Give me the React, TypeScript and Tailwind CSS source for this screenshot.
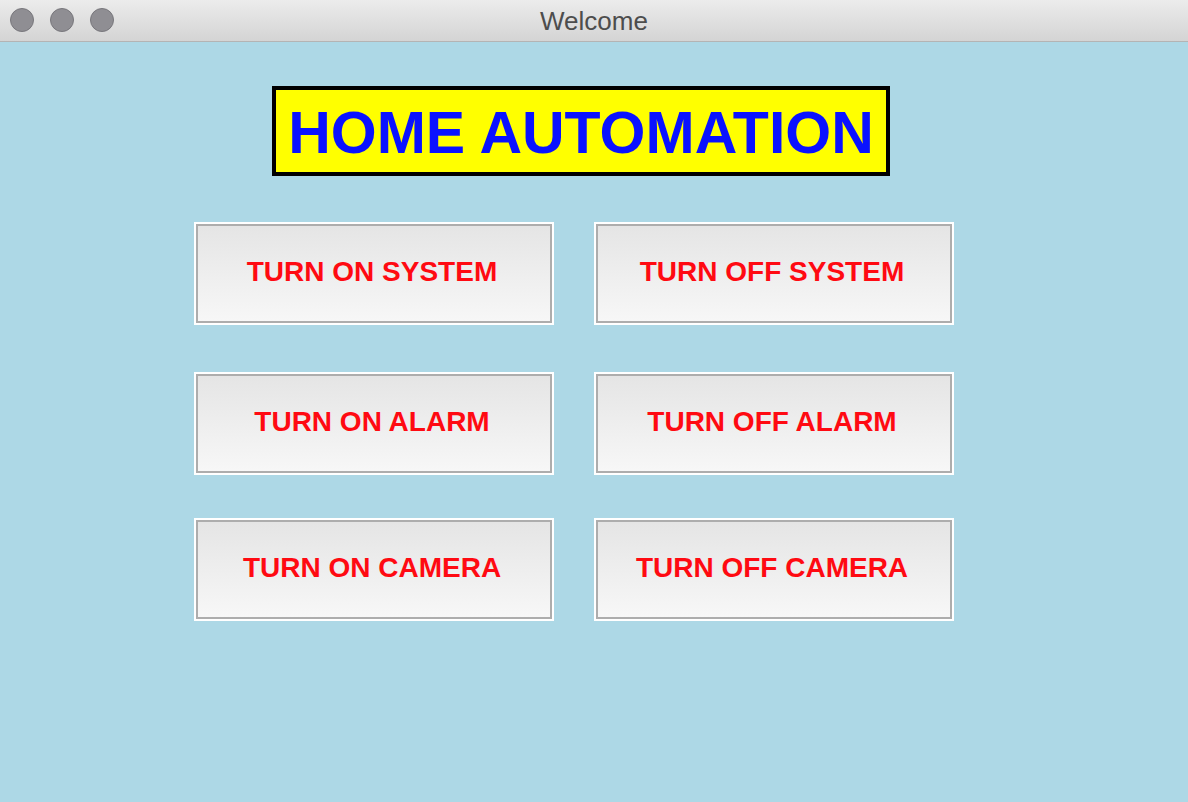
const buttons = [
  ['TURN ON SYSTEM', 'TURN OFF SYSTEM'],
  ['TURN ON ALARM', 'TURN OFF ALARM'],
  ['TURN ON CAMERA', 'TURN OFF CAMERA'],
];

function Light() {
  return <span className="h-6 w-6 rounded-full border border-[#78777c] bg-[#8f8e93]" />;
}

function ActionButton({ label }: { label: string }) {
  return (
    <div className="h-[103px] w-[360px] border-2 border-white">
      <div className="flex h-full w-full items-center justify-center border-2 border-[#adadad] bg-gradient-to-b from-[#e5e5e5] to-[#f7f7f7] pb-1 pr-1">
        <span className="text-[28px] font-bold leading-none text-[#ff0a12]">{label}</span>
      </div>
    </div>
  );
}

export default function App() {
  return (
    <div className="flex h-[802px] w-[1188px] flex-col bg-[#add8e6] font-['Liberation_Sans',Arial,sans-serif]">
      <div className="relative flex h-[42px] shrink-0 items-center justify-center border-b border-[#b4b4b4] bg-gradient-to-b from-[#ececec] to-[#d4d4d4]">
        <div className="absolute left-[10px] top-[8px] flex gap-4">
          <Light />
          <Light />
          <Light />
        </div>
        <span className="text-[26px] leading-none text-[#4d4d4d]">Welcome</span>
      </div>

      <div className="flex flex-col pl-[194px]">
        <div className="ml-[78px] mt-[44px] flex h-[90px] w-[618px] items-center justify-center border-4 border-black bg-[#ffff00]">
          <h1 className="pt-[4px] text-[59px] font-bold leading-none text-[#0a12ff]">HOME AUTOMATION</h1>
        </div>

        <div className="mt-[46px] flex flex-col">
          {buttons.map((row, i) => (
            <div key={i} className={`flex gap-10 ${i === 1 ? 'mt-[47px]' : i === 2 ? 'mt-[43px]' : ''}`}>
              {row.map(label => (
                <ActionButton key={label} label={label} />
              ))}
            </div>
          ))}
        </div>
      </div>
    </div>
  );
}
